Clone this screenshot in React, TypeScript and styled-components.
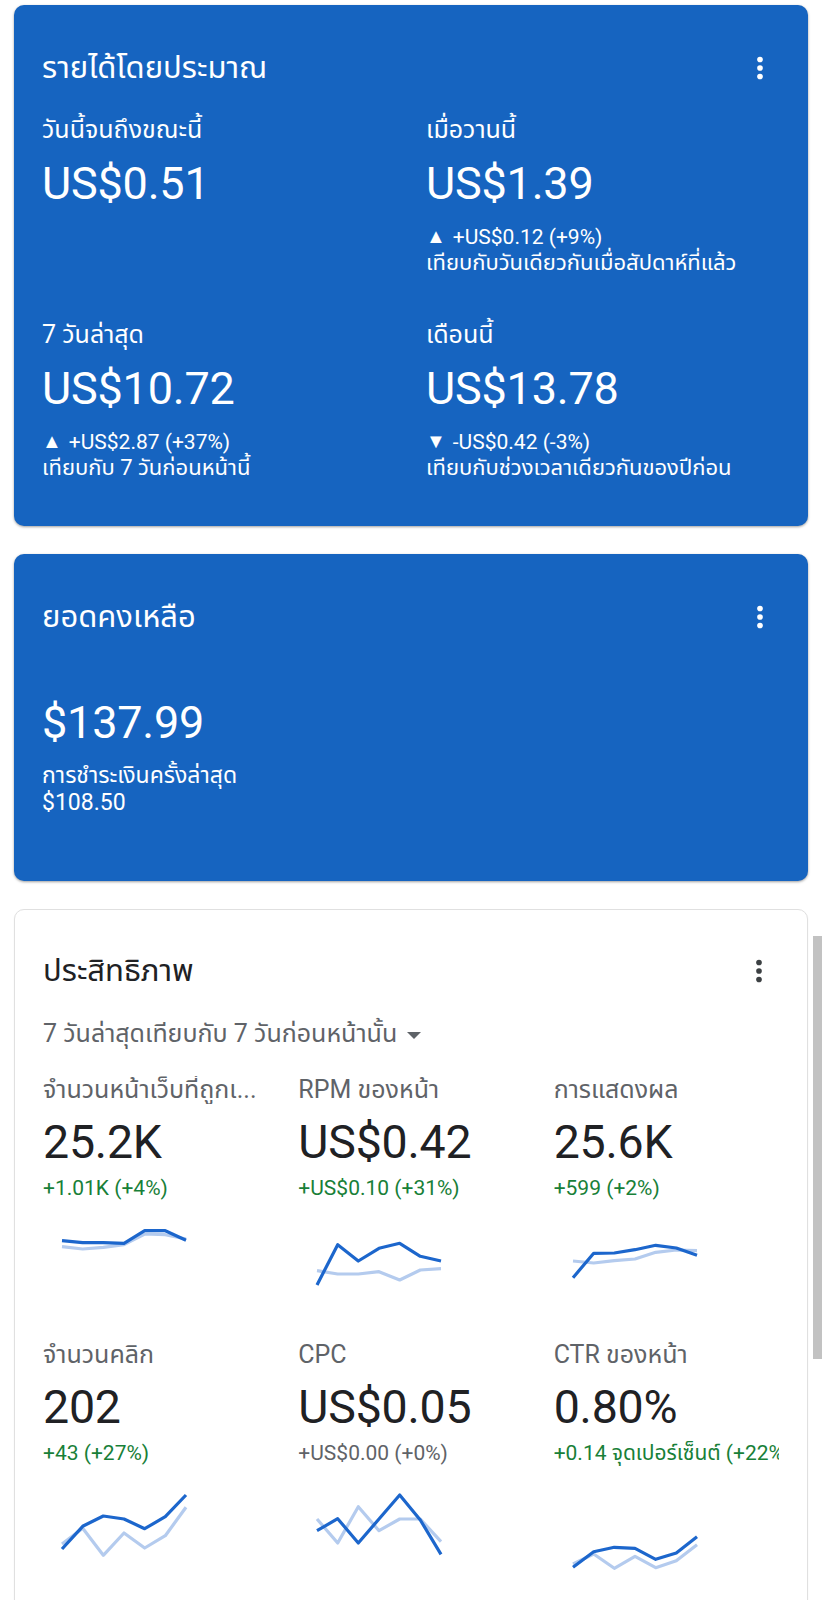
import React from "react";
import styled, { createGlobalStyle } from "styled-components";

const GlobalStyle = createGlobalStyle`
  html, body {
    margin: 0;
    padding: 0;
    background: #ffffff;
  }
  body {
    font-family: Roboto, "Noto Sans Thai", "Noto Sans Thai UI", "Noto Sans", sans-serif;
    -webkit-font-smoothing: antialiased;
  }
  * { box-sizing: border-box; }
`;

const Page = styled.main`
  position: relative;
  width: 822px;
  height: 1600px;
  overflow: hidden;
  padding: 5px 14px 0;
  display: flex;
  flex-direction: column;
  gap: 28px;
`;

const Card = styled.section<{ $tone: "blue" | "white"; $padBottom: number }>`
  flex: none;
  border-radius: 10px;
  padding: ${(p) => (p.$tone === "blue" ? "45px" : "43px")} 28px ${(p) => p.$padBottom}px;
  background: ${(p) => (p.$tone === "blue" ? "#1664c0" : "#ffffff")};
  color: ${(p) => (p.$tone === "blue" ? "#ffffff" : "#202124")};
  border: ${(p) => (p.$tone === "blue" ? "none" : "1px solid #e0e0e0")};
  box-shadow: ${(p) =>
    p.$tone === "blue"
      ? "0 1px 3px rgba(0,0,0,0.28), 0 1px 2px rgba(0,0,0,0.12)"
      : "0 1px 2px rgba(0,0,0,0.06)"};
  display: flex;
  flex-direction: column;
`;

const CardHeader = styled.div`
  display: flex;
  align-items: center;
  justify-content: space-between;
  height: 36px;
`;

const CardTitle = styled.h2`
  margin: 0;
  font-size: 31px;
  line-height: 36px;
  font-weight: 400;
  color: inherit;
`;

const MenuButton = styled.button<{ $tone: "light" | "dark" }>`
  width: 34px;
  height: 34px;
  margin-right: 3px;
  padding: 0;
  border: 0;
  background: none;
  display: flex;
  color: ${(p) => (p.$tone === "light" ? "#ffffff" : "#3c4043")};
  svg {
    width: 34px;
    height: 34px;
  }
`;

const StatGrid = styled.div`
  display: grid;
  grid-template-columns: 1fr 1fr;
  column-gap: 30px;
  row-gap: 44px;
  margin-top: 30px;
`;

const Stat = styled.div`
  display: flex;
  flex-direction: column;
  min-width: 0;
`;

const StatLabel = styled.div`
  font-size: 25px;
  line-height: 28px;
  margin-bottom: 14px;
  white-space: nowrap;
`;

const BigValue = styled.div`
  font-size: 45px;
  line-height: 52px;
  letter-spacing: -0.2px;
`;

const StatDelta = styled.div`
  font-size: 21px;
  line-height: 28px;
  margin-top: 12px;
  white-space: nowrap;
`;

const Arrow = styled.span`
  font-size: 20px;
  margin-right: 7px;
  vertical-align: 1px;
`;

const StatCompare = styled.div`
  font-size: 22px;
  line-height: 28px;
  margin-top: -2px;
  white-space: nowrap;
`;

const BalanceValue = styled(BigValue)`
  margin-top: 62px;
`;

const BalanceNotes = styled.div`
  display: flex;
  flex-direction: column;
  margin-top: 13px;
`;

const BalanceNote = styled.div`
  font-size: 23px;
  line-height: 27px;
`;

const RangeSelect = styled.button`
  align-self: flex-start;
  display: inline-flex;
  align-items: center;
  gap: 10px;
  margin-top: 31px;
  padding: 0;
  border: 0;
  background: none;
  font-family: inherit;
  font-size: 25px;
  line-height: 28px;
  color: #5f6368;
`;

const Caret = styled.span`
  width: 0;
  height: 0;
  border-left: 7.5px solid transparent;
  border-right: 7.5px solid transparent;
  border-top: 7.5px solid #5f6368;
  margin-top: 2px;
`;

const MetricGrid = styled.div`
  display: grid;
  grid-template-columns: repeat(3, 1fr);
  column-gap: 30px;
  row-gap: 30px;
  margin-top: 28px;
`;

const Metric = styled.div`
  display: flex;
  flex-direction: column;
  min-width: 0;
`;

const MetricLabel = styled.div`
  font-size: 25px;
  line-height: 28px;
  color: #5f6368;
  white-space: nowrap;
  overflow: hidden;
  text-overflow: ellipsis;
  margin-bottom: 12px;
`;

const MetricValue = styled(BigValue)`
  font-size: 46.5px;
  color: #202124;
`;

const MetricDelta = styled.div<{ $tone: "up" | "flat" }>`
  font-size: 21px;
  line-height: 28px;
  margin-top: 6px;
  white-space: nowrap;
  overflow: hidden;
  text-overflow: clip;
  color: ${(p) => (p.$tone === "up" ? "#188038" : "#5f6368")};
`;

const Spark = styled.svg`
  display: block;
  margin: 19px 0 0 19px;
  width: 124px;
  height: 90px;
  overflow: visible;
`;

const SparkLine = styled.polyline<{ $tone: "current" | "previous" }>`
  fill: none;
  stroke: ${(p) => (p.$tone === "current" ? "#1c66cc" : "#b4cbee")};
  stroke-width: 3.2;
  stroke-linejoin: round;
  stroke-linecap: butt;
`;

const Scrollbar = styled.div`
  position: absolute;
  top: 936px;
  right: 0;
  width: 9px;
  height: 423px;
  background: #c2c2c2;
`;

const DotsIcon = () => (
  <svg viewBox="0 0 24 24" aria-hidden="true">
    <circle cx="12" cy="6" r="2" fill="currentColor" />
    <circle cx="12" cy="12" r="2" fill="currentColor" />
    <circle cx="12" cy="18" r="2" fill="currentColor" />
  </svg>
);

type SparkData = { current: number[]; previous: number[] };

const STEP = 124 / 6;
const toPoints = (ys: number[]) =>
  ys.map((y, i) => `${(i * STEP).toFixed(1)},${y}`).join(" ");

const Sparkline = ({ data }: { data: SparkData }) => (
  <Spark viewBox="0 0 124 90">
    <SparkLine $tone="previous" points={toPoints(data.previous)} />
    <SparkLine $tone="current" points={toPoints(data.current)} />
  </Spark>
);

type MetricItem = {
  label: string;
  value: string;
  delta: string;
  tone: "up" | "flat";
  spark: SparkData;
};

const metrics: MetricItem[] = [
  {
    label: "จำนวนหน้าเว็บที่ถูกเ...",
    value: "25.2K",
    delta: "+1.01K (+4%)",
    tone: "up",
    spark: {
      current: [19.7, 21.7, 21.7, 22.3, 9.7, 9.7, 19.3],
      previous: [25.7, 28, 26.3, 23.7, 13, 13.7, 18],
    },
  },
  {
    label: "RPM ของหน้า",
    value: "US$0.42",
    delta: "+US$0.10 (+31%)",
    tone: "up",
    spark: {
      current: [64, 23.7, 40, 27.3, 22.3, 35.3, 40],
      previous: [49.7, 53, 53, 50.7, 59, 49, 47.7],
    },
  },
  {
    label: "การแสดงผล",
    value: "25.6K",
    delta: "+599 (+2%)",
    tone: "up",
    spark: {
      current: [56.7, 32.3, 32, 28.7, 24.3, 27, 34.3],
      previous: [40, 42, 39.7, 38, 31.3, 29, 29.7],
    },
  },
  {
    label: "จำนวนคลิก",
    value: "202",
    delta: "+43 (+27%)",
    tone: "up",
    spark: {
      current: [63, 40.3, 30, 33, 42.7, 30.7, 9],
      previous: [58, 42.3, 69.3, 47, 62, 49.7, 21.3],
    },
  },
  {
    label: "CPC",
    value: "US$0.05",
    delta: "+US$0.00 (+0%)",
    tone: "flat",
    spark: {
      current: [44.7, 32.7, 57, 33, 9, 34, 68.3],
      previous: [33, 57, 20.7, 44.7, 33, 33, 55.7],
    },
  },
  {
    label: "CTR ของหน้า",
    value: "0.80%",
    delta: "+0.14 จุดเปอร์เซ็นต์ (+22%)",
    tone: "up",
    spark: {
      current: [81.3, 65.7, 61.3, 62.3, 73.3, 67, 50.7],
      previous: [78, 68, 82.3, 70.3, 81.7, 74.7, 58.7],
    },
  },
];

type EarningItem = {
  label: string;
  value: string;
  delta?: { dir: "up" | "down"; text: string };
  compare?: string;
};

const earnings: EarningItem[] = [
  { label: "วันนี้จนถึงขณะนี้", value: "US$0.51" },
  {
    label: "เมื่อวานนี้",
    value: "US$1.39",
    delta: { dir: "up", text: "+US$0.12 (+9%)" },
    compare: "เทียบกับวันเดียวกันเมื่อสัปดาห์ที่แล้ว",
  },
  {
    label: "7 วันล่าสุด",
    value: "US$10.72",
    delta: { dir: "up", text: "+US$2.87 (+37%)" },
    compare: "เทียบกับ 7 วันก่อนหน้านี้",
  },
  {
    label: "เดือนนี้",
    value: "US$13.78",
    delta: { dir: "down", text: "-US$0.42 (-3%)" },
    compare: "เทียบกับช่วงเวลาเดียวกันของปีก่อน",
  },
];

export default function App() {
  return (
    <>
      <GlobalStyle />
      <Page>
        <Card $tone="blue" $padBottom={44}>
          <CardHeader>
            <CardTitle>รายได้โดยประมาณ</CardTitle>
            <MenuButton $tone="light" aria-label="เมนู">
              <DotsIcon />
            </MenuButton>
          </CardHeader>
          <StatGrid>
            {earnings.map((e) => (
              <Stat key={e.label}>
                <StatLabel>{e.label}</StatLabel>
                <BigValue>{e.value}</BigValue>
                {e.delta && (
                  <StatDelta>
                    <Arrow>{e.delta.dir === "up" ? "▲" : "▼"}</Arrow>
                    {e.delta.text}
                  </StatDelta>
                )}
                {e.compare && <StatCompare>{e.compare}</StatCompare>}
              </Stat>
            ))}
          </StatGrid>
        </Card>

        <Card $tone="blue" $padBottom={65}>
          <CardHeader>
            <CardTitle>ยอดคงเหลือ</CardTitle>
            <MenuButton $tone="light" aria-label="เมนู">
              <DotsIcon />
            </MenuButton>
          </CardHeader>
          <BalanceValue>$137.99</BalanceValue>
          <BalanceNotes>
            <BalanceNote>การชำระเงินครั้งล่าสุด</BalanceNote>
            <BalanceNote>$108.50</BalanceNote>
          </BalanceNotes>
        </Card>

        <Card $tone="white" $padBottom={40}>
          <CardHeader>
            <CardTitle>ประสิทธิภาพ</CardTitle>
            <MenuButton $tone="dark" aria-label="เมนู">
              <DotsIcon />
            </MenuButton>
          </CardHeader>
          <RangeSelect>
            7 วันล่าสุดเทียบกับ 7 วันก่อนหน้านั้น
            <Caret />
          </RangeSelect>
          <MetricGrid>
            {metrics.map((m) => (
              <Metric key={m.label}>
                <MetricLabel>{m.label}</MetricLabel>
                <MetricValue>{m.value}</MetricValue>
                <MetricDelta $tone={m.tone}>{m.delta}</MetricDelta>
                <Sparkline data={m.spark} />
              </Metric>
            ))}
          </MetricGrid>
        </Card>
        <Scrollbar />
      </Page>
    </>
  );
}
